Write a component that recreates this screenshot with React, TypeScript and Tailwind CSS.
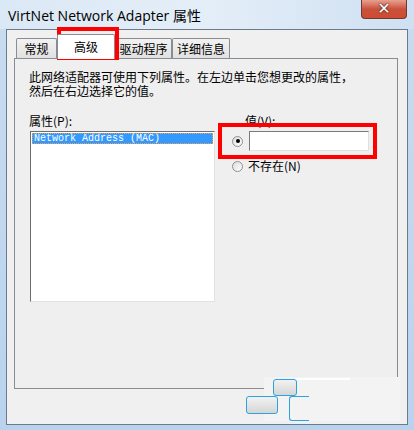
import React from "react";

const cjk = { fontFamily: '"Noto Sans CJK SC", "Liberation Sans", sans-serif' };

const Tab = ({ label, w, active }: { label: string; w: string; active?: boolean }) => (
  <div
    className={
      active
        ? `${w} h-[25px] -mb-px z-10 border border-b-0 border-[#898c95] bg-white flex items-center justify-center text-[12px] text-black rounded-t-[2px]`
        : `${w} h-[20px] border border-b-0 border-[#898c95] bg-gradient-to-b from-[#f2f2f2] to-[#e1e1e1] flex items-center justify-center text-[12px] text-black rounded-t-[2px]`
    }
    style={cjk}
  >
    {label}
  </div>
);

const Radio = ({ checked }: { checked?: boolean }) => (
  <div className="w-[11px] h-[11px] rounded-full border border-[#8e8f8f] bg-gradient-to-br from-[#dcdcdc] to-white flex items-center justify-center shrink-0">
    {checked && <div className="w-[4px] h-[4px] rounded-full bg-black" />}
  </div>
);

export default function App() {
  return (
    <div className="relative w-[414px] h-[430px] overflow-hidden bg-gradient-to-b from-[#c9dcf0] to-[#b9d3ee]">
      {/* title bar */}
      <div className="h-[29px] flex items-start bg-gradient-to-r from-[#dbe8f5] via-[#e4eef8] to-[#cfe0f2]">
        <div
          className="pl-[8px] pt-[8px] text-[14px] leading-[16px] text-black"
          style={{ fontFamily: '"Open Sans", "Noto Sans CJK SC", sans-serif' }}
        >
          VirtNet Network Adapter 属性
        </div>
        <div className="ml-auto mr-[7px] w-[46px] h-[19px] rounded-b-[4px] border border-t-0 border-[#6b3a35] bg-gradient-to-b from-[#e8a08e] via-[#c9523d] to-[#d24a2f] flex items-center justify-center">
          <span
            className="text-white text-[16px] font-bold leading-none"
            style={{ fontFamily: '"DejaVu Sans", sans-serif', textShadow: "0 0 2px #3a1a14, 0 0 1px #3a1a14" }}
          >
            ✕
          </span>
        </div>
      </div>

      {/* client area */}
      <div className="mx-[6px] h-[396px] border border-[#6b7b8c] bg-[#f0f0f0] pl-[7px] pr-[9px] pt-[4px]">
        {/* tabs */}
        <div className="flex items-end pl-[2px] h-[24px]">
          <Tab label="常规" w="w-[41px]" />
          <Tab label="高级" w="w-[58px]" active />
          <Tab label="驱动程序" w="w-[57px]" />
          <Tab label="详细信息" w="w-[58px]" />
        </div>

        {/* panel */}
        <div className="h-[331px] border border-[#898c95] bg-[#efefef] pl-[14px] pt-[11px] text-[12px] text-black" style={cjk}>
          <div className="leading-[14px]">
            此网络适配器可使用下列属性。在左边单击您想更改的属性，
            <br />
            然后在右边选择它的值。
          </div>

          <div className="flex mt-[16px]">
            <div className="w-[186px]">
              <div className="leading-[14px]">属性(P):</div>
              <div className="mt-[3px] ml-[1px] h-[171px] border border-t-[#6d6d6d] border-l-[#6d6d6d] border-b-[#e2e2e2] border-r-[#e2e2e2] bg-white p-[1px]">
                <div
                  className="h-[11px] bg-[#3399ff] text-white text-[10px] leading-[11px] pl-[2px] outline outline-1 outline-dotted outline-[#f0a040] -outline-offset-1"
                  style={{ fontFamily: '"Liberation Mono", monospace' }}
                >
                  Network Address (MAC)
                </div>
              </div>
            </div>

            <div className="ml-[17px]">
              <div className="leading-[14px] pl-[13px]">值(V):</div>
              <div className="flex items-center mt-[3px] h-[20px]">
                <Radio checked />
                <div className="ml-[6px] w-[120px] h-[20px] border border-t-[#7a7a7a] border-l-[#7a7a7a] border-b-[#e0e0e0] border-r-[#e0e0e0] bg-white" />
              </div>
              <div className="flex items-center mt-[8px]">
                <Radio />
                <span className="ml-[5px] leading-[14px]">不存在(N)</span>
              </div>
            </div>
          </div>
        </div>
      </div>

      {/* red highlight boxes */}
      <div className="absolute left-[57px] top-[27px] w-[62px] h-[33px] border-[4px] border-[#ff0000]" />
      <div className="absolute left-[218px] top-[123px] w-[159px] h-[36px] border-[4px] border-[#ff0000]" />

      {/* glitched button remnants at the bottom */}
      <div className="absolute left-[264px] top-[377px] w-[136px] h-[44px] bg-[#f3f3f3]" />
      <div className="absolute left-[295px] top-[378px] w-[55px] h-[2px] bg-white" />
      <div className="absolute left-[273px] top-[379px] w-[24px] h-[17px] rounded-[3px] border border-[#2aa4e0] bg-gradient-to-b from-[#f2f2f2] to-[#d5d5d5]" />
      <div className="absolute left-[246px] top-[396px] w-[32px] h-[18px] rounded-[3px] border border-[#2aa4e0] bg-gradient-to-b from-[#f2f2f2] to-[#d5d5d5]" />
      <div className="absolute left-[289px] top-[396px] w-[20px] h-[25px] rounded-l-[3px] border border-r-0 border-[#2aa4e0] bg-[#f3f3f3]" />
    </div>
  );
}
